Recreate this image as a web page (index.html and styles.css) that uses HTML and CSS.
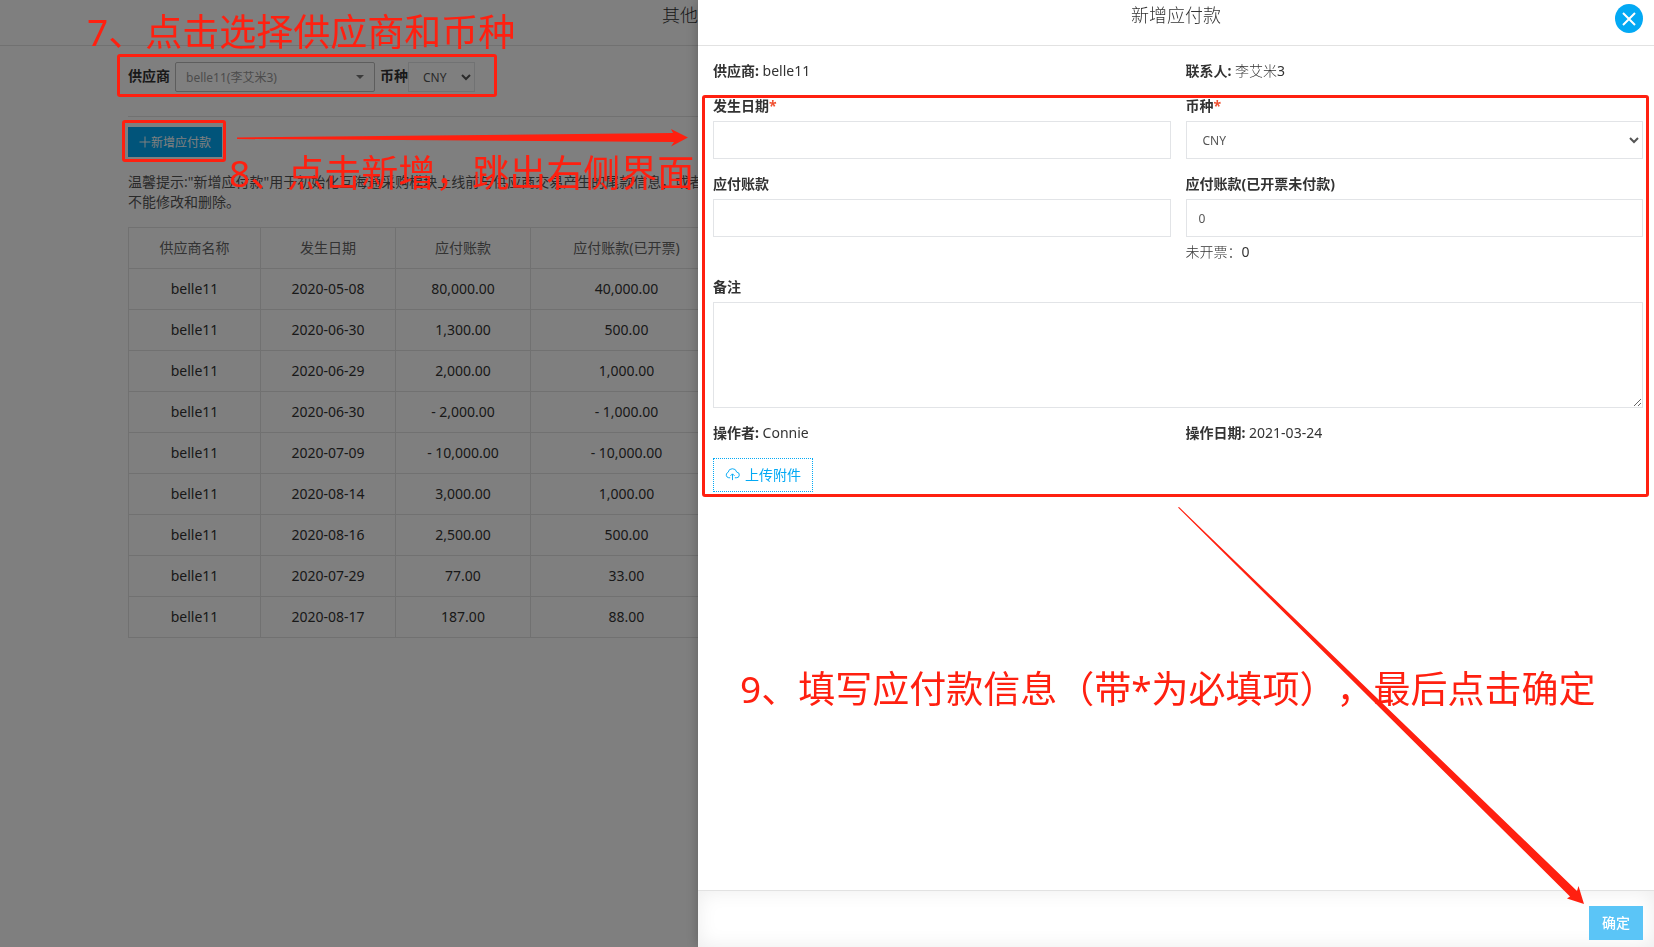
FILE: index.html
```html
<!DOCTYPE html>
<html lang="zh-CN">
<head>
<meta charset="utf-8">
<title>新增应付款</title>
<link rel="stylesheet" href="styles.css">
</head>
<body>
<div class="page">
  <header class="page-header"><h1 class="page-title">其他应付款</h1></header>
  <main class="page-body">
    <div class="filters">
      <label class="filter-label" for="supplier">供应商</label>
      <span class="picker">
        <select class="picker-select" id="supplier"><option>belle11(李艾米3)</option></select>
        <svg class="picker-caret" viewBox="0 0 8 4" aria-hidden="true"><path d="M0 0h8L4 4z"/></svg>
      </span>
      <label class="filter-label" for="currency">币种</label>
      <select class="currency-select" id="currency"><option>CNY</option></select>
    </div>
    <section class="content">
      <button class="add-button" type="button">
        <svg class="add-icon" viewBox="0 0 12 12" aria-hidden="true"><path d="M6 0.500v11M0.500 6h11"/></svg>新增应付款
      </button>
      <p class="tip">温馨提示:"新增应付款"用于初始化互海通采购模块上线前与供应商交易产生的尾款信息，或者<br>不能修改和删除。</p>
      <table class="records">
        <colgroup><col class="col-name"><col class="col-date"><col class="col-date"><col class="col-invoiced"></colgroup>
        <thead><tr><th>供应商名称</th><th>发生日期</th><th>应付账款</th><th>应付账款(已开票)</th></tr></thead>
        <tbody>
          <tr><td>belle11</td><td>2020-05-08</td><td>80,000.00</td><td>40,000.00</td></tr>
          <tr><td>belle11</td><td>2020-06-30</td><td>1,300.00</td><td>500.00</td></tr>
          <tr><td>belle11</td><td>2020-06-29</td><td>2,000.00</td><td>1,000.00</td></tr>
          <tr><td>belle11</td><td>2020-06-30</td><td>- 2,000.00</td><td>- 1,000.00</td></tr>
          <tr><td>belle11</td><td>2020-07-09</td><td>- 10,000.00</td><td>- 10,000.00</td></tr>
          <tr><td>belle11</td><td>2020-08-14</td><td>3,000.00</td><td>1,000.00</td></tr>
          <tr><td>belle11</td><td>2020-08-16</td><td>2,500.00</td><td>500.00</td></tr>
          <tr><td>belle11</td><td>2020-07-29</td><td>77.00</td><td>33.00</td></tr>
          <tr><td>belle11</td><td>2020-08-17</td><td>187.00</td><td>88.00</td></tr>
        </tbody>
      </table>
    </section>
  </main>
</div>

<div class="backdrop"></div>

<aside class="drawer">
  <header class="drawer-header">
    <h2 class="drawer-title">新增应付款</h2>
    <button class="close-button" type="button" aria-label="关闭">
      <svg class="close-icon" viewBox="0 0 14 14" aria-hidden="true"><path d="M1 1l12 12M13 1L1 13"/></svg>
    </button>
  </header>
  <form class="drawer-form">
    <div class="row">
      <p class="info"><b>供应商:</b> belle11</p>
      <p class="info"><b>联系人:</b> <span class="light">李艾米</span>3</p>
    </div>
    <div class="row">
      <div class="field">
        <label class="field-label" for="date">发生日期<span class="required">*</span></label>
        <input class="control" id="date" type="text">
      </div>
      <div class="field">
        <label class="field-label" for="form-currency">币种<span class="required">*</span></label>
        <select class="control" id="form-currency"><option>CNY</option></select>
      </div>
    </div>
    <div class="row">
      <div class="field">
        <label class="field-label" for="payable">应付账款</label>
        <input class="control" id="payable" type="text">
      </div>
      <div class="field">
        <label class="field-label" for="invoiced">应付账款(已开票未付款)</label>
        <input class="control" id="invoiced" type="text" value="0">
        <p class="hint"><span class="light">未开票：</span>0</p>
      </div>
    </div>
    <div class="field">
      <label class="field-label" for="remark">备注</label>
      <textarea class="control remark" id="remark"></textarea>
    </div>
    <div class="row">
      <p class="info"><b>操作者:</b> Connie</p>
      <p class="info"><b>操作日期:</b> 2021-03-24</p>
    </div>
    <button class="upload-button" type="button">
      <svg class="upload-icon" viewBox="0 0 16 14" aria-hidden="true"><path d="M5.500 11H4A3 3 0 0 1 3.300 5.200A4.700 4.700 0 0 1 12.500 5A3 3 0 0 1 12 11h-1.500M8 13.500V7M5.800 9L8 6.800L10.200 9"/></svg>上传附件
    </button>
  </form>
  <footer class="drawer-footer"><button class="confirm-button" type="button">确定</button></footer>
</aside>

<div class="notes">
  <div class="frame frame-filters"></div>
  <div class="frame frame-add"></div>
  <div class="frame frame-form"></div>
  <p class="note note-7">7、点击选择供应商和币种</p>
  <p class="note note-8">8、点击新增，跳出右侧界面</p>
  <p class="note note-9">9、填写应付款信息（带*为必填项），最后点击确定</p>
  <svg class="arrow arrow-right" viewBox="0 0 451 18" aria-hidden="true"><path d="M0 8.500L436 4L434 0L451 8.500L434 17.500L437 13L0 10z"/></svg>
  <svg class="arrow arrow-down" viewBox="0 0 408 398" aria-hidden="true"><path d="M0 0.500L1 0L399 384L400.500 379L406 397L389 391.500L392 389.500z"/></svg>
</div>
</body>
</html>
```
FILE: styles.css
```css
* { box-sizing: border-box; }

body {
  margin: 0;
  min-height: 100vh;
  overflow: hidden;
  color: #333;
  background: #fff;
  font: 14px/20px "Noto Sans", "Noto Sans CJK SC", sans-serif;
  text-spacing-trim: space-all;
}

h1, h2, p { margin: 0; font-weight: 400; }
button, input, select, textarea { font-family: inherit; }

.page-header {
  height: 46px;
  padding: 4px 0 0 662px;
  border-bottom: 1px solid #e2e2e2;
}

.page-title, .drawer-title { font-size: 18px; line-height: 22px; font-weight: 300; }
.page-body { padding: 15px 128px 0; }

.filters { display: flex; align-items: center; height: 32px; }
.filter-label { padding-bottom: 2px; font-weight: 700; }

.picker { position: relative; width: 200px; margin: 0 5px; }
.picker-select {
  display: block;
  width: 100%;
  height: 30px;
  padding: 0 10px;
  border: 1px solid #bbb;
  border-radius: 2px;
  appearance: none;
  color: #999;
  background: #fff;
  font-size: 12px;
}
.picker-caret { position: absolute; top: 13px; right: 11px; width: 8px; height: 4px; fill: #777; }

.currency-select {
  width: 67px;
  height: 30px;
  padding: 0 10px;
  border: 1px solid #e2e4e7;
  color: #555;
  background: #fff;
  font-size: 12px;
}

.content { margin-top: 23px; padding-top: 10px; border-top: 1px solid #e2e2e2; }

.add-button {
  display: flex;
  align-items: center;
  height: 30px;
  padding: 0 11px;
  border: 0;
  color: #fff;
  background: #03a9f4;
  font-size: 12px;
}
.add-icon { width: 12px; height: 12px; stroke: #fff; fill: none; }

.tip { margin: 15px 0; color: #555; white-space: nowrap; }

.records { width: 594px; border-collapse: collapse; table-layout: fixed; text-align: center; }
.records th, .records td { height: 41px; padding: 0; border: 1px solid #e2e2e2; }
.records th { color: #666; font-weight: 400; }
.col-name { width: 132px; }
.col-date { width: 135px; }
.col-invoiced { width: 192px; }

.backdrop { position: fixed; inset: 0; background: rgba(0, 0, 0, 0.5); }

.drawer {
  position: fixed;
  top: 0;
  right: 0;
  bottom: 0;
  width: 57.8%;
  display: flex;
  flex-direction: column;
  background: #fff;
  box-shadow: 0 0 12px rgba(0, 0, 0, 0.25);
}

.drawer-header { position: relative; height: 46px; padding: 4px 0; border-bottom: 1px solid #e2e2e2; text-align: center; }
.close-button {
  position: absolute;
  top: 4px;
  right: 11px;
  display: grid;
  place-items: center;
  width: 28px;
  height: 29px;
  padding: 0;
  border: 0;
  border-radius: 50%;
  background: #03a9f4;
}
.close-icon { width: 14px; height: 14px; fill: none; stroke: #fff; stroke-width: 2; }

.drawer-form { flex: 1; padding: 15px 11px 0 15px; }
.row { display: grid; grid-template-columns: 1fr 1fr; column-gap: 15px; }
.info { padding-bottom: 15px; }
.light { font-weight: 300; }
.field { min-height: 78px; }
.field-label { display: block; margin-bottom: 5px; font-weight: 700; }
.required { color: #f05030; }

.control {
  display: block;
  width: 100%;
  height: 38px;
  padding: 6px 12px;
  border: 1px solid #e2e4e7;
  border-radius: 0;
  color: #555;
  background: #fff;
  font-size: 12px;
}
.remark { height: 106px; margin-bottom: 15px; }
.hint { padding: 5px 0 15px; }

.upload-button {
  display: flex;
  align-items: center;
  gap: 5px;
  height: 34px;
  padding: 0 11px 2px;
  border: 1px dotted #03a9f4;
  color: #03a9f4;
  background: #fff;
  font-size: 14px;
}
.upload-icon { width: 15px; height: 14px; fill: none; stroke: #03a9f4; }

.drawer-footer {
  display: flex;
  justify-content: flex-end;
  padding: 15px 11px 7px;
  border-top: 1px solid #e2e2e2;
  box-shadow: inset 0 0 20px rgba(0, 0, 0, 0.08);
}
.confirm-button { width: 54px; height: 34px; padding: 0 0 2px; border: 0; color: #fff; background: #5bc5f7; font-size: 14px; font-weight: 500; }

/* Tutorial marks drawn over the whole screen */
.notes { position: absolute; inset: 0; pointer-events: none; }
.frame { position: absolute; border: 3px solid #ff2010; border-radius: 3px; }
.frame-filters { top: 54px; left: 117px; width: 380px; height: 43px; }
.frame-add { top: 120px; left: 122px; width: 104px; height: 42px; }
.frame-form { top: 95px; right: 5px; width: 947px; height: 402px; }
.note { position: absolute; color: #ff2010; font-size: 37px; line-height: 48px; white-space: nowrap; }
.note-7 { top: 8px; left: 87px; }
.note-8 { top: 149px; left: 229px; }
.note-9 { top: 665px; left: 740px; }
.arrow { position: absolute; fill: #ff2010; }
.arrow-right { top: 129px; left: 237px; width: 451px; height: 18px; }
.arrow-down { top: 507px; left: 1178px; width: 408px; height: 398px; }
```
